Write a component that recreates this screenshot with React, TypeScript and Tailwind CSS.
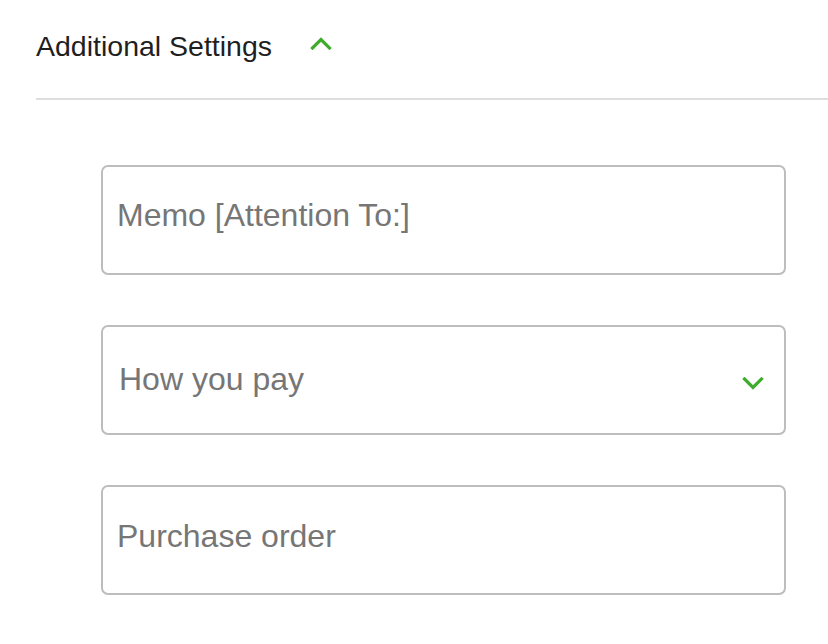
import { useState } from "react";

const font = { fontFamily: '"Liberation Sans", Arial, sans-serif' };

function Chevron({ up, className }: { up?: boolean; className?: string }) {
  return (
    <svg width="22" height="14" viewBox="0 0 22 14" className={className} fill="none">
      <path
        d={up ? "M2.5 12 L11 3.5 L19.5 12" : "M2.5 2 L11 10.5 L19.5 2"}
        stroke="#3fac2e"
        strokeWidth="3.2"
        strokeLinecap="square"
        strokeLinejoin="miter"
      />
    </svg>
  );
}

export default function App() {
  const [open, setOpen] = useState(true);
  const [memo, setMemo] = useState("");
  const [po, setPo] = useState("");

  return (
    <div className="min-h-[644px] w-[828px] bg-white pl-[36px]" style={font}>
      {/* Section header */}
      <button
        onClick={() => setOpen(!open)}
        className="flex items-center pt-[30px] pb-[36px] text-left"
      >
        <span className="text-[28.5px] leading-[32px] text-[#1f1f1f]">Additional Settings</span>
        <Chevron up={open} className="ml-[38px] mt-[-6px]" />
      </button>
      <div className="h-[2px] bg-[#dedede]" />

      {open && (
        <div className="ml-[65px] mt-[65px] flex w-[685px] flex-col gap-[50px]">
          <input
            value={memo}
            onChange={(e) => setMemo(e.target.value)}
            placeholder="Memo [Attention To:]"
            className="h-[110px] w-full rounded-[7px] border-2 border-[#bdbdbd] px-[14px] pb-[10px] text-[32px] text-[#333] outline-none placeholder:text-[#767676]"
          />

          <div className="relative">
            <select
              defaultValue=""
              className="h-[110px] w-full appearance-none rounded-[7px] border-2 border-[#bdbdbd] bg-white px-[16px] pb-[2px] text-[32px] text-[#767676] outline-none"
            >
              <option value="" disabled>
                How you pay
              </option>
              <option value="card">Credit card</option>
              <option value="check">Check</option>
              <option value="bank">Bank transfer</option>
            </select>
            <Chevron className="pointer-events-none absolute right-[22px] top-[52px]" />
          </div>

          <input
            value={po}
            onChange={(e) => setPo(e.target.value)}
            placeholder="Purchase order"
            className="h-[110px] w-full rounded-[7px] border-2 border-[#bdbdbd] px-[14px] pb-[8px] text-[32px] text-[#333] outline-none placeholder:text-[#767676]"
          />
        </div>
      )}
    </div>
  );
}
